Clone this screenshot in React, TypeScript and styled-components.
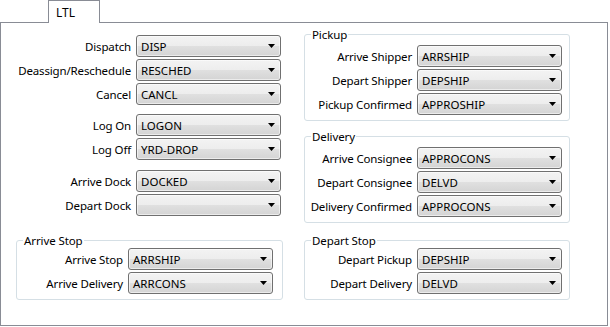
import React from 'react';
import styled, { createGlobalStyle } from 'styled-components';

const GlobalStyle = createGlobalStyle`
  html, body {
    margin: 0;
    padding: 0;
    background: #ffffff;
  }
  body {
    font-family: "Noto Sans", "Open Sans", sans-serif;
    font-size: 11px;
    color: #000000;
  }
`;

const Window = styled.div`
  width: 610px;
  height: 327px;
  background: #ffffff;
  display: flex;
  flex-direction: column;
`;

const TabStrip = styled.div`
  display: flex;
  height: 22px;
  padding-left: 48px;
`;

const Tab = styled.div`
  position: relative;
  z-index: 1;
  width: 52px;
  height: 23px;
  box-sizing: border-box;
  border: 1px solid #898c95;
  border-bottom: none;
  background: #ffffff;
  padding: 3px 0 0 7px;
  font-size: 12px;
`;

const Panel = styled.div`
  width: 608px;
  height: 304px;
  box-sizing: border-box;
  border: 1px solid #898c95;
  display: flex;
`;

const LeftColumn = styled.div`
  flex: 0 0 303px;
  display: flex;
  flex-direction: column;
  padding-top: 12px;
`;

const RightColumn = styled.div`
  display: flex;
  flex-direction: column;
  padding-top: 4px;
`;

const Section = styled.div<{ $space?: number }>`
  display: grid;
  grid-template-columns: 130px 145px;
  column-gap: 5px;
  row-gap: 2px;
  margin-top: ${({ $space }) => $space ?? 0}px;
`;

const Group = styled.fieldset<{ $space?: number; $left?: number; $labelWidth: number; $padTop?: number; $width?: number }>`
  box-sizing: border-box;
  width: ${({ $width }) => $width ?? 266}px;
  margin: ${({ $space }) => $space ?? 0}px 0 0 ${({ $left }) => $left ?? 0}px;
  padding: ${({ $padTop }) => $padTop ?? 0}px 6px 5px 0;
  border: 1px solid #d5dfe5;
  border-radius: 3px;
  min-width: 0;
  display: grid;
  grid-template-columns: ${({ $labelWidth }) => $labelWidth}px 145px;
  column-gap: 5px;
  row-gap: 2px;
`;

const Legend = styled.legend`
  margin-left: 6px;
  padding: 0 1px;
  line-height: 15px;
  font-size: 11.5px;
  letter-spacing: -0.1px;
`;

const Label = styled.span`
  align-self: center;
  text-align: right;
  white-space: nowrap;
  font-size: 11.5px;
  letter-spacing: -0.15px;
`;

const Combo = styled.div`
  height: 22px;
  box-sizing: border-box;
  border: 1px solid #707070;
  border-radius: 3px;
  background: linear-gradient(#f3f3f3 0%, #ededed 50%, #e0e0e0 51%, #d4d4d4 100%);
  box-shadow: inset 0 0 0 1px rgba(255, 255, 255, 0.55);
  display: flex;
  align-items: center;
  padding: 0 5px 0 4px;
  font-size: 11.5px;
`;

const ComboText = styled.span`
  flex: 1;
  white-space: nowrap;
`;

const Arrow = () => (
  <svg width="7" height="4" viewBox="0 0 7 4">
    <polygon points="0,0 7,0 3.5,4" fill="#000" />
  </svg>
);

const Field = ({ label, value }: { label: string; value: string }) => (
  <>
    <Label>{label}</Label>
    <Combo>
      <ComboText>{value}</ComboText>
      <Arrow />
    </Combo>
  </>
);

export default function App() {
  return (
    <Window>
      <GlobalStyle />
      <TabStrip>
        <Tab>LTL</Tab>
      </TabStrip>
      <Panel>
        <LeftColumn>
          <Section>
            <Field label="Dispatch" value="DISP" />
            <Field label="Deassign/Reschedule" value="RESCHED" />
            <Field label="Cancel" value="CANCL" />
          </Section>
          <Section $space={9}>
            <Field label="Log On" value="LOGON" />
            <Field label="Log Off" value="YRD-DROP" />
          </Section>
          <Section $space={10}>
            <Field label="Arrive Dock" value="DOCKED" />
            <Field label="Depart Dock" value="" />
          </Section>
          <Group $space={17} $left={15} $labelWidth={106} $width={267}>
            <Legend>Arrive Stop</Legend>
            <Field label="Arrive Stop" value="ARRSHIP" />
            <Field label="Arrive Delivery" value="ARRCONS" />
          </Group>
        </LeftColumn>
        <RightColumn>
          <Group $labelWidth={107} $padTop={3}>
            <Legend>Pickup</Legend>
            <Field label="Arrive Shipper" value="ARRSHIP" />
            <Field label="Depart Shipper" value="DEPSHIP" />
            <Field label="Pickup Confirmed" value="APPROSHIP" />
          </Group>
          <Group $space={8} $labelWidth={107} $padTop={3}>
            <Legend>Delivery</Legend>
            <Field label="Arrive Consignee" value="APPROCONS" />
            <Field label="Depart Consignee" value="DELVD" />
            <Field label="Delivery Confirmed" value="APPROCONS" />
          </Group>
          <Group $space={10} $labelWidth={107}>
            <Legend>Depart Stop</Legend>
            <Field label="Depart Pickup" value="DEPSHIP" />
            <Field label="Depart Delivery" value="DELVD" />
          </Group>
        </RightColumn>
      </Panel>
    </Window>
  );
}
